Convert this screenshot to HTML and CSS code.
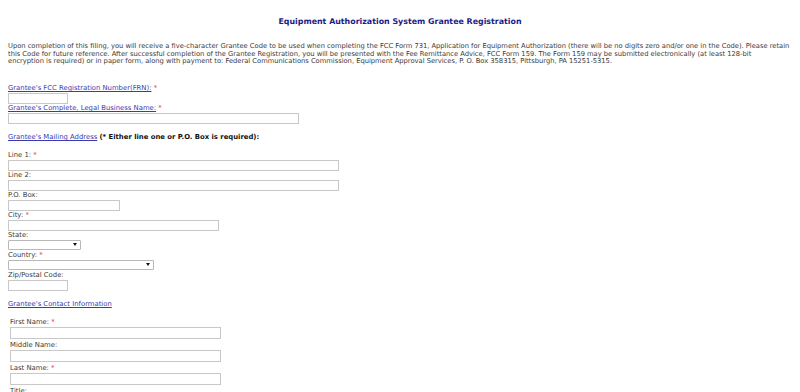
FILE: index.html
```html
<!DOCTYPE html>
<html>
<head>
<meta charset="utf-8">
<link rel="stylesheet" href="styles.css">
</head>
<body>
<div class="page">
  <h1 class="title">Equipment Authorization System Grantee Registration</h1>
  <p class="intro">Upon completion of this filing, you will receive a five-character Grantee Code to be used when completing the FCC Form 731, Application for Equipment Authorization (there will be no digits zero and/or one in the Code). Please retain<br>this Code for future reference. After successful completion of the Grantee Registration, you will be presented with the Fee Remittance Advice, FCC Form 159. The Form 159 may be submitted electronically (at least 128-bit<br>encryption is required) or in paper form, along with payment to: Federal Communications Commission, Equipment Approval Services, P. O. Box 358315, Pittsburgh, PA 15251-5315.</p>

  <div class="field top">
    <label class="lbl"><a href="#">Grantee's FCC Registration Number(FRN):</a> <span class="req">*</span></label>
    <input class="inp w60" type="text">
  </div>
  <div class="field">
    <label class="lbl"><a href="#">Grantee's Complete, Legal Business Name:</a> <span class="req">*</span></label>
    <input class="inp w291" type="text">
  </div>

  <div class="section-head"><a href="#">Grantee's Mailing Address</a> <b>(* Either line one or P.O. Box is required):</b></div>

  <div class="field">
    <label class="lbl plain">Line 1: <span class="req">*</span></label>
    <input class="inp w331" type="text">
  </div>
  <div class="field">
    <label class="lbl plain">Line 2:</label>
    <input class="inp w331" type="text">
  </div>
  <div class="field">
    <label class="lbl plain">P.O. Box:</label>
    <input class="inp w112" type="text">
  </div>
  <div class="field">
    <label class="lbl plain">City: <span class="req">*</span></label>
    <input class="inp w211" type="text">
  </div>
  <div class="field">
    <label class="lbl plain">State:</label>
    <span class="sel w73"><select></select></span>
  </div>
  <div class="field">
    <label class="lbl plain">Country: <span class="req">*</span></label>
    <span class="sel w146"><select></select></span>
  </div>
  <div class="field">
    <label class="lbl plain">Zip/Postal Code:</label>
    <input class="inp w60" type="text">
  </div>

  <div class="section-head contact-head"><a href="#">Grantee's Contact Information</a></div>

  <div class="contact">
    <div class="field cfield">
      <label class="lbl plain">First Name: <span class="req">*</span></label>
      <input class="inp cinp w211" type="text">
    </div>
    <div class="field cfield">
      <label class="lbl plain">Middle Name:</label>
      <input class="inp cinp w211" type="text">
    </div>
    <div class="field cfield">
      <label class="lbl plain">Last Name: <span class="req">*</span></label>
      <input class="inp cinp w211" type="text">
    </div>
    <div class="field cfield">
      <label class="lbl plain">Title:</label>
      <input class="inp cinp w211" type="text">
    </div>
  </div>
</div>
</body>
</html>
```

FILE: styles.css
```css
html, body {
  margin: 0;
  padding: 0;
  background: #ffffff;
}
body {
  font-family: "DejaVu Sans", Verdana, sans-serif;
  font-size: 6.85px;
  color: #3a3a3a;
}
.page {
  padding: 0 0 0 8px;
  display: flex;
  flex-direction: column;
  align-items: flex-start;
}
.title {
  align-self: stretch;
  margin: 16px 8px 0 0;
  text-align: center;
  font-size: 7.9px;
  font-weight: bold;
  color: #1c1c86;
  line-height: 11px;
}
.intro {
  margin: 16px 0 0 0;
  font-size: 6.75px;
  letter-spacing: -0.02px;
  line-height: 7.7px;
  white-space: nowrap;
  color: #3a3a3a;
}
a {
  color: #3b3bb0;
  text-decoration: underline;
}
.req {
  color: #e0201c;
}
.field {
  display: flex;
  flex-direction: column;
  align-items: flex-start;
}
.field.top {
  margin-top: 18px;
}
.lbl {
  line-height: 8px;
  height: 8px;
  margin-bottom: 1px;
  display: block;
}
.plain {
  color: #3d3a33;
}
.inp {
  box-sizing: border-box;
  height: 11px;
  border: 1px solid #c8c8c8;
  background: #fff;
  padding: 0;
  margin: 0;
  display: block;
}
.w60 { width: 60px; }
.w112 { width: 112px; }
.w211 { width: 211px; }
.w291 { width: 291px; }
.w331 { width: 331px; }
.w73 { width: 73px; }
.w146 { width: 146px; }
.sel {
  position: relative;
  display: block;
  height: 10px;
  margin-bottom: 1px;
}
.sel select {
  -webkit-appearance: none;
  appearance: none;
  box-sizing: border-box;
  width: 100%;
  height: 10px;
  border: 1px solid #b8b8b8;
  border-radius: 1px;
  background: #fff;
  padding: 0;
  margin: 0;
  display: block;
}
.sel::after {
  content: "";
  position: absolute;
  right: 4px;
  top: 3px;
  border-left: 2px solid transparent;
  border-right: 2px solid transparent;
  border-top: 3px solid #111;
}
.section-head {
  margin-top: 9px;
  margin-bottom: 10px;
  line-height: 8px;
}
.section-head b {
  color: #111;
}
.contact-head {
  margin-top: 9px;
  margin-bottom: 10px;
}
.contact {
  padding-left: 2px;
  display: flex;
  flex-direction: column;
  gap: 2px;
}
.cinp {
  height: 12px;
}
```
